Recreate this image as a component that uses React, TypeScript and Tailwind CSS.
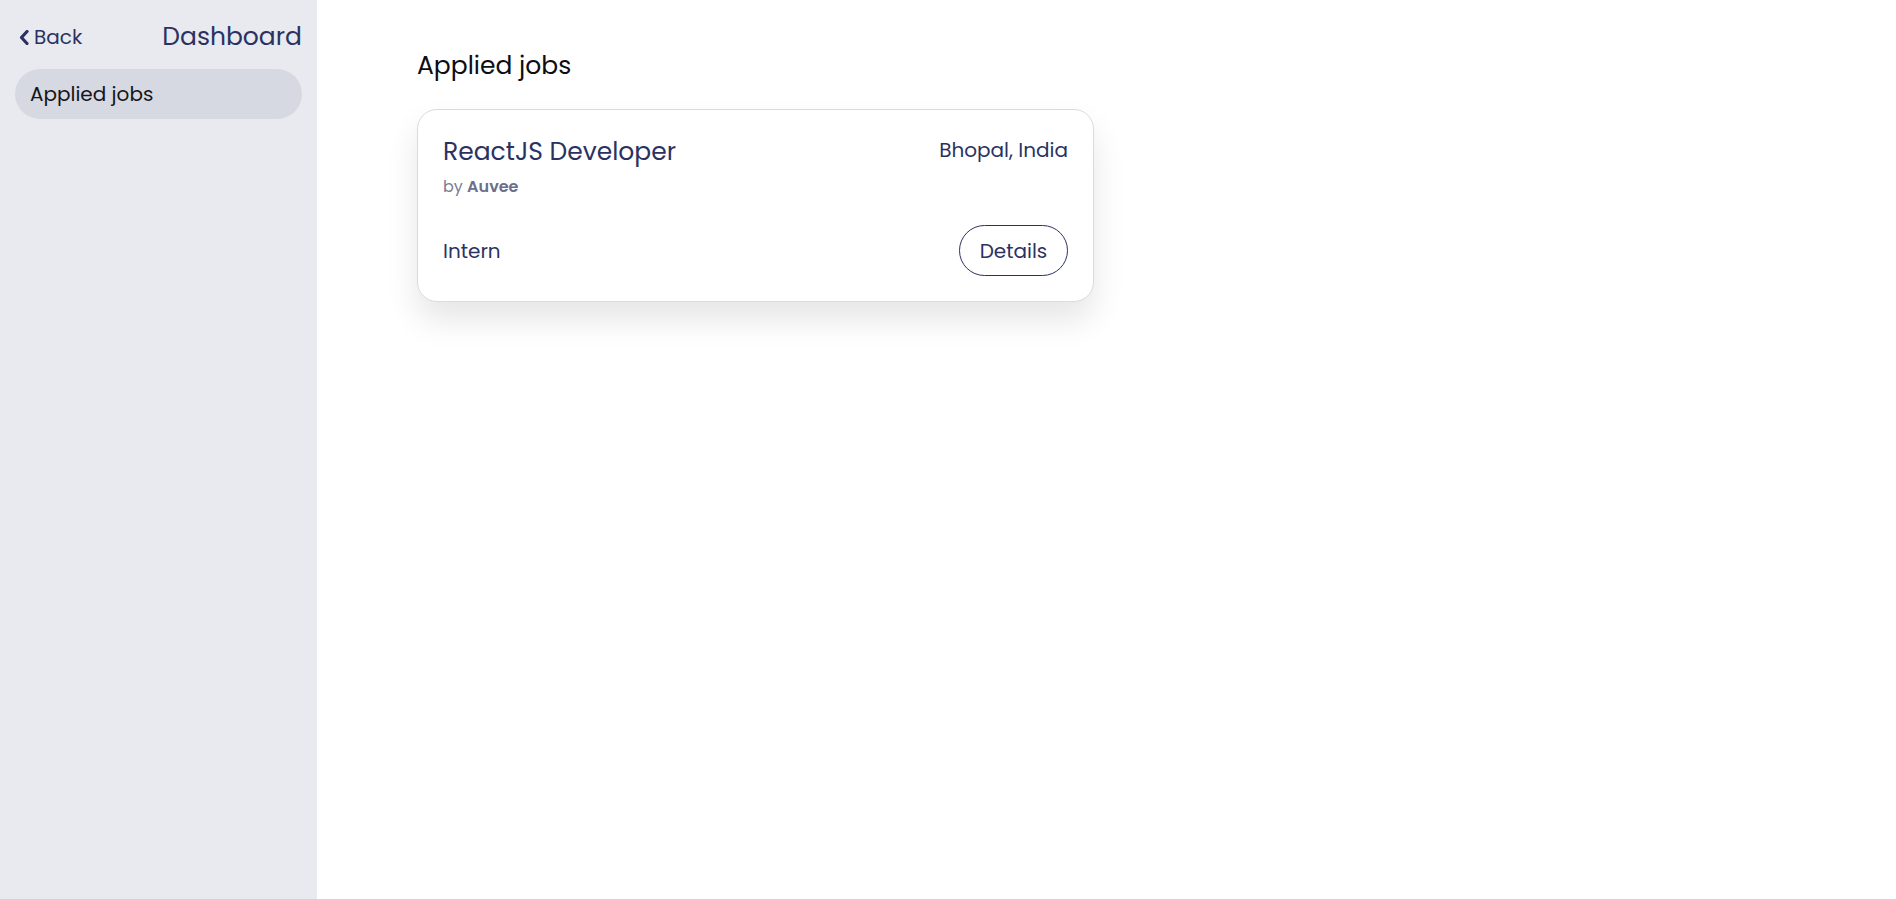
import React from 'react';

const navy = 'text-[#2b3262]';

function Sidebar() {
  return (
    <aside className="w-[317px] shrink-0 min-h-screen bg-[#e9eaef] px-[15px] pt-[16px]">
      <div className="flex items-center justify-between pl-[4px] h-[42px]">
        <button className={`flex items-center gap-[5px] text-[20px] ${navy}`}>
          <svg width="10" height="15" viewBox="0 0 10 15" className="shrink-0">
            <polyline
              points="8,1.5 2.5,7.5 8,13.5"
              fill="none"
              stroke="#2b3262"
              strokeWidth="3.2"
              strokeLinecap="round"
              strokeLinejoin="round"
            />
          </svg>
          <span>Back</span>
        </button>
        <h1 className={`text-[25px] ${navy}`}>Dashboard</h1>
      </div>
      <nav className="mt-[11px]">
        <div className="h-[50px] rounded-full bg-[#d6d9e2] flex items-center pl-[15px] text-[20px] text-[#15161c]">
          Applied jobs
        </div>
      </nav>
    </aside>
  );
}

interface Job {
  title: string;
  company: string;
  location: string;
  type: string;
}

function JobCard({ job }: { job: Job }) {
  return (
    <div className="w-[677px] rounded-[20px] border border-[#dadbe2] bg-white px-[25px] pt-[22px] pb-[25px] shadow-[0_18px_32px_rgba(0,0,0,0.10)]">
      <div className="flex items-start justify-between">
        <div>
          <h3 className={`text-[25px] leading-[39px] ${navy}`}>{job.title}</h3>
          <p className="text-[16px] leading-[24px] text-[#7a7e95] mt-[4px]">
            by <span className="font-semibold text-[#6a6f8c]">{job.company}</span>
          </p>
        </div>
        <span className={`text-[20px] leading-[37px] ${navy}`}>{job.location}</span>
      </div>
      <div className="flex items-center justify-between mt-[26px]">
        <span className={`text-[20px] ${navy}`}>{job.type}</span>
        <button
          className={`h-[51px] w-[109px] rounded-full border border-[#2b3262] text-[20px] ${navy} flex items-center justify-center`}
        >
          Details
        </button>
      </div>
    </div>
  );
}

export default function App() {
  const jobs: Job[] = [
    { title: 'ReactJS Developer', company: 'Auvee', location: 'Bhopal, India', type: 'Intern' },
  ];

  return (
    <div
      className="flex min-h-screen bg-white"
      style={{ fontFamily: 'Poppins, Inter, "Noto Sans", sans-serif' }}
    >
      <Sidebar />
      <main className="flex-1 pl-[100px] pt-[49px]">
        <h2 className="text-[25px] leading-[34px] text-[#0d0d12]">Applied jobs</h2>
        <div className="mt-[26px] flex flex-col gap-6">
          {jobs.map((job) => (
            <JobCard key={job.title} job={job} />
          ))}
        </div>
      </main>
    </div>
  );
}
